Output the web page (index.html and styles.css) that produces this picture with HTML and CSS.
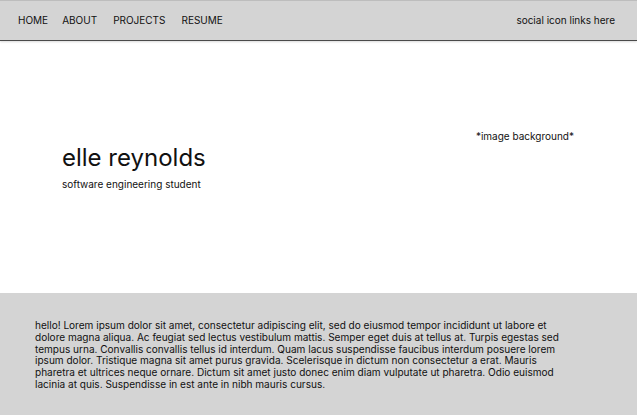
FILE: index.html
```html
<!DOCTYPE html>
<html>
<head>
<meta charset="utf-8">
<link rel="stylesheet" href="styles.css">
</head>
<body>
<header class="topbar">
  <nav class="nav">
    <a class="nav-link" href="#">HOME</a>
    <a class="nav-link" href="#">ABOUT</a>
    <a class="nav-link" href="#">PROJECTS</a>
    <a class="nav-link" href="#">RESUME</a>
  </nav>
  <div class="social">social icon links here</div>
</header>
<section class="hero">
  <div class="hero-text">
    <h1 class="name">elle reynolds</h1>
    <p class="tagline">software engineering student</p>
  </div>
  <div class="bg-note">*image background*</div>
</section>
<section class="about">
  <p class="about-text">hello! Lorem ipsum dolor sit amet, consectetur adipiscing elit, sed do eiusmod tempor incididunt ut labore et dolore magna aliqua. Ac feugiat sed lectus vestibulum mattis. Semper eget duis at tellus at. Turpis egestas sed tempus urna. Convallis convallis tellus id interdum. Quam lacus suspendisse faucibus interdum posuere lorem ipsum dolor. Tristique magna sit amet purus gravida. Scelerisque in dictum non consectetur a erat. Mauris pharetra et ultrices neque ornare. Dictum sit amet justo donec enim diam vulputate ut pharetra. Odio euismod lacinia at quis. Suspendisse in est ante in nibh mauris cursus.</p>
</section>
</body>
</html>
```
FILE: styles.css
```css
* { box-sizing: border-box; }
html, body { margin: 0; padding: 0; }
body {
  font-family: Inter, "Liberation Sans", sans-serif;
  color: #111;
  background: #fff;
  width: 637px;
  height: 415px;
  overflow: hidden;
  display: flex;
  flex-direction: column;
}
.topbar {
  height: 41px;
  background: #d4d4d4;
  border-top: 1px solid #bdbdbd;
  border-bottom: 1px solid #4a4a4a;
  box-shadow: 0 1px 2px rgba(0,0,0,0.15);
  display: flex;
  align-items: center;
  justify-content: space-between;
  padding: 0 22px 1px 18px;
  font-size: 10px;
}
.nav { display: flex; }
.nav-link { color: #111; text-decoration: none; margin-right: 14px; }
.nav-link:nth-child(2) { margin-right: 16px; }
.nav-link:nth-child(3) { margin-right: 16px; }
.social { color: #111; }
.hero {
  height: 252px;
  display: flex;
  justify-content: space-between;
  padding: 88px 63px 0 62px;
}
.name {
  font-size: 24px;
  font-weight: 400;
  margin: 14px 0 0 0;
  line-height: 30px;
}
.tagline {
  font-size: 10px;
  margin: 5px 0 0 0;
}
.bg-note {
  font-size: 10px;
  margin-top: 1px;
}
.about {
  flex: 1;
  background: #d4d4d4;
  padding: 27px 35px 0 35px;
}
.about-text {
  margin: 0;
  width: 530px;
  font-size: 10.05px;
  line-height: 11.8px;
}
```
